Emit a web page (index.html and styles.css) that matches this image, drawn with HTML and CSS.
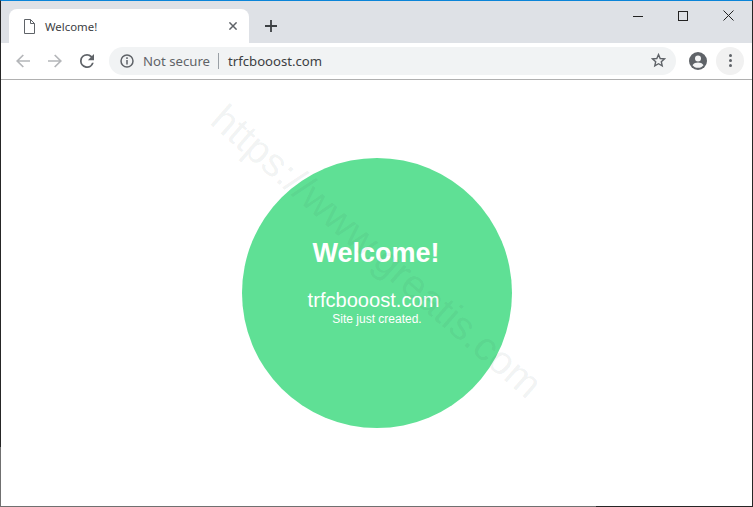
FILE: index.html
```html
<!DOCTYPE html>
<html lang="en">
<head>
<meta charset="utf-8">
<title>Welcome!</title>
<link rel="stylesheet" href="styles.css">
</head>
<body>
<div class="window">
  <header class="tabstrip">
    <div class="tab">
      <svg class="tab-icon" width="11" height="15" viewBox="0 0 11 15"><path d="M.5 .5H6.500L10.500 4.500V14.500H.5ZM6.500 .5V4.500H10.500" fill="none" stroke="#5f6368" stroke-width="1"/></svg>
      <span class="tab-title">Welcome!</span>
      <svg class="tab-close" width="8" height="8" viewBox="0 0 8 8"><path d="M.4 .4L7.600 7.600M7.600 .4L.4 7.600" stroke="#5f6368" stroke-width="1.500"/></svg>
    </div>
    <svg class="new-tab" width="12" height="12" viewBox="0 0 12 12"><path d="M6 0V12M0 6H12" stroke="#3c4043" stroke-width="1.800"/></svg>
    <div class="window-controls">
      <svg width="10" height="10" viewBox="0 0 10 10"><path d="M0 5.500H10" stroke="#222" stroke-width="1"/></svg>
      <svg width="10" height="10" viewBox="0 0 10 10"><rect x=".5" y=".5" width="9" height="9" fill="none" stroke="#222"/></svg>
      <svg width="11" height="11" viewBox="0 0 11 11"><path d="M.5 .5L10.500 10.500M10.500 .5L.5 10.500" stroke="#222" stroke-width="1"/></svg>
    </div>
  </header>
  <nav class="toolbar">
    <svg class="nav-icon" width="14" height="14" viewBox="0 0 14 14"><path d="M14 7H1.200M7.300 1L1.200 7L7.300 13" fill="none" stroke="#b4b6b9" stroke-width="1.700"/></svg>
    <svg class="nav-icon" width="14" height="14" viewBox="0 0 14 14"><path d="M0 7H12.800M6.700 1L12.800 7L6.700 13" fill="none" stroke="#b4b6b9" stroke-width="1.700"/></svg>
    <svg class="nav-icon" width="14" height="14" viewBox="4 4 16 16"><path d="M17.650 6.350A7.960 7.960 0 0 0 12 4a8 8 0 1 0 7.730 10h-2.080A6 6 0 1 1 12 6c1.660 0 3.140.69 4.220 1.780L13 11h7V4z" fill="#5f6368"/></svg>
    <div class="omnibox">
      <svg class="info" width="14" height="14" viewBox="0 0 14 14"><circle cx="7" cy="7" r="6" fill="none" stroke="#5f6368" stroke-width="1.500"/><path d="M7 6V10.500M7 3.300V5" stroke="#5f6368" stroke-width="1.500"/></svg>
      <span class="security">Not secure</span>
      <span class="divider"></span>
      <span class="url">trfcbooost.com</span>
      <svg class="star" width="15" height="15" viewBox="0 0 15 15"><path d="M7.500 1.600L9.200 5.500L13.500 5.900L10.300 8.700L11.200 12.900L7.500 10.700L3.800 12.900L4.700 8.700L1.500 5.900L5.800 5.500Z" fill="none" stroke="#5f6368" stroke-width="1.400"/></svg>
    </div>
    <svg class="account" width="18" height="18" viewBox="0 0 18 18"><circle cx="9" cy="9" r="9" fill="#5f6368"/><circle cx="9" cy="6.500" r="3" fill="#f4f5f6"/><path d="M3.500 13.200C4.500 11.200 7 10.500 9 10.500C11 10.500 13.500 11.200 14.500 13.200C13.300 14.800 11.300 15.800 9 15.800C6.700 15.800 4.700 14.800 3.500 13.200Z" fill="#f4f5f6"/></svg>
    <div class="menu"><i></i><i></i><i></i></div>
  </nav>
  <main class="page">
    <div class="circle">
      <h1>Welcome!</h1>
      <p class="domain">trfcbooost.com</p>
      <p class="note">Site just created.</p>
    </div>
    <div class="watermark">https://www.greatis.com</div>
  </main>
</div>
</body>
</html>
```
FILE: styles.css
```css
* { box-sizing: border-box; }
html, body { margin: 0; height: 100%; overflow: hidden; background: #fff; }
.window {
  position: relative;
  width: 753px; height: 507px;
  display: flex; flex-direction: column;
  border: 1px solid #262626; border-top: 1px solid #0a84d8;
  font-family: "Noto Sans", sans-serif;
}
.window::before {
  content: ""; position: absolute; left: -1px; top: 446px; bottom: -1px; width: 1px; background: #707070;
}
.window::after {
  content: ""; position: absolute; left: -1px; bottom: -1px; width: 596px; height: 1px; background: #707070;
}
.tabstrip {
  height: 42px; flex: none; background: #dee1e6;
  display: flex; align-items: flex-end; padding-left: 8px;
}
.tab {
  width: 240px; height: 34px; background: #fff;
  border-radius: 8px 8px 0 0;
  display: flex; align-items: center; padding: 0 12px 0 15px;
}
.tab-title { margin-left: 10px; flex: 1; font-size: 11.4px; color: #3c4043; }
.new-tab { margin: 0 0 11px 16px; }
.window-controls {
  margin-left: auto; align-self: flex-start;
  display: flex; align-items: center; gap: 35px;
  padding: 9px 18px 0 0;
}
.toolbar {
  height: 37px; flex: none; background: #fff;
  border-bottom: 1px solid #b0b0b0;
  display: flex; align-items: center; padding: 0 8px 1px 15px;
}
.nav-icon { margin-right: 18px; }
.nav-icon:nth-child(3) { margin-right: 15px; }
.omnibox {
  flex: 1; height: 28px; border-radius: 14px; background: #f1f3f4;
  display: flex; align-items: center; padding: 0 10px 0 11px;
}
.security { margin-left: 9px; font-size: 13.2px; color: #5f6368; }
.divider { width: 1px; height: 16px; background: #9aa0a6; margin: 0 9px 0 8px; }
.url { font-size: 13.15px; color: #3c4043; flex: 1; }
.account { margin-left: 13px; }
.menu {
  width: 28px; height: 28px; border-radius: 50%; background: #f1f1f1;
  margin-left: 9px;
  display: flex; flex-direction: column; align-items: center; justify-content: center; gap: 2px;
}
.menu i { width: 3px; height: 3px; border-radius: 50%; background: #5f6368; }
.page { position: relative; flex: 1; overflow: hidden; background: #fff; font-family: "Liberation Sans", Arial, sans-serif; }
.circle {
  width: 270px; height: 270px; border-radius: 50%; background: #5fe095;
  margin: 78px 0 0 241px; color: #fff; text-align: center;
  display: flex; flex-direction: column; align-items: center; padding-top: 79px;
}
.circle h1 { margin: 0; font-size: 27px; line-height: 32px; font-weight: 700; position: relative; left: -1px; }
.domain { margin: 20px 0 0; font-size: 20.100px; line-height: 23px; position: relative; left: -3.500px; }
.note { margin: 0; font-size: 12px; line-height: 14px; }
.watermark {
  position: absolute; left: 156px; top: 148px; width: 440px;
  font-size: 40px; line-height: 46px; white-space: nowrap; text-align: center;
  color: rgba(60, 90, 80, .08);
  transform: rotate(41deg);
  pointer-events: none;
}
```
